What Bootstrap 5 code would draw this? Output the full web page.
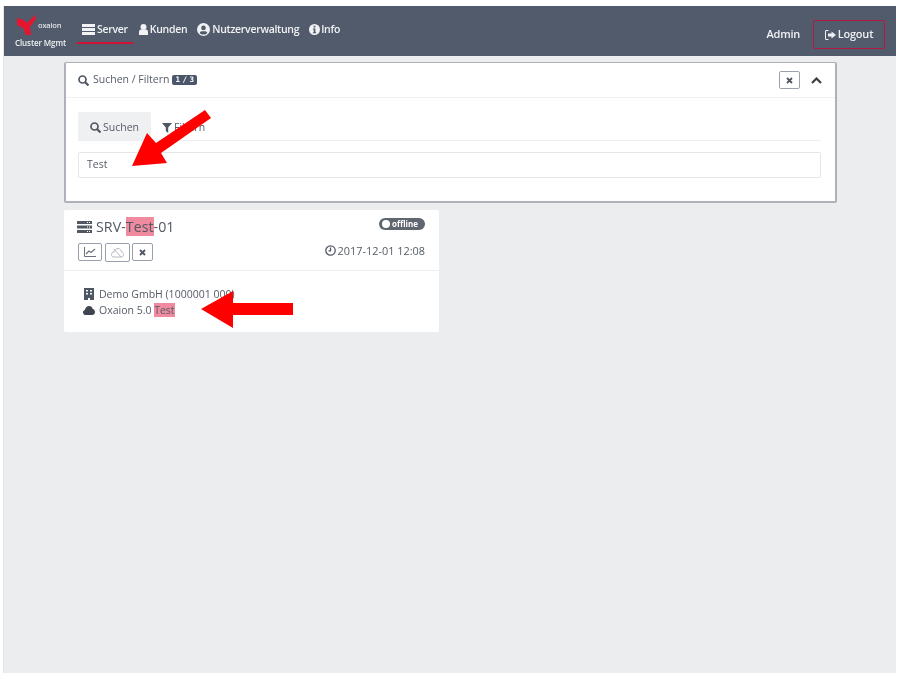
<!DOCTYPE html>
<html lang="de">
<head>
<meta charset="utf-8">
<title>Oxaion Cluster Mgmt</title>
<link rel="stylesheet" href="https://cdn.jsdelivr.net/npm/bootstrap@5.3.0/dist/css/bootstrap.min.css">
<style>
html,body{height:100%;background:#fff;}
body{font-family:"Open Sans","Liberation Sans",sans-serif;font-size:10.5px;color:#555b66;position:relative;overflow:hidden;}
.app-frame{position:absolute;left:3px;top:6px;width:893px;height:667px;background:#ecedef;filter:blur(.55px);display:flex;flex-direction:column;border-left:1px solid #e3e4e7;}
.top-bar{height:50px;background:#525b6b;color:#eef0f3;padding:0 11px 0 12px;flex:none;}
.brand-box{width:52px;height:50px;margin-right:9px;display:flex;flex-direction:column;font-weight:600;}
.brand-row{display:flex;align-items:center;height:21px;margin-top:9px;}
.brand-row span{font-size:7.5px;margin-left:1px;color:#dfe2e6;letter-spacing:-.2px;}
.brand-sub{font-size:8px;line-height:12px;white-space:nowrap;margin-top:1px;margin-left:-1px;letter-spacing:-.1px;}
.menu-item{height:32px;margin-top:6px;padding:10px 5px 5px 5px;display:flex;align-items:center;gap:2px;font-size:10.5px;font-weight:600;letter-spacing:-.3px;color:#f0f2f4;margin-bottom:12px;border-bottom:2px solid transparent;}
.menu-tight{gap:1px;}
.menu-item.is-on{border-bottom-color:#cf1236;}
.menu-item svg{fill:#f0f2f4;}
.admin-name{font-size:11px;font-weight:600;color:#eef0f3;margin-right:13px;letter-spacing:-.25px;}
.logout-btn{width:72px;height:29px;border:1px solid #b41a41;border-radius:2px;font-size:11px;font-weight:600;color:#eef0f3;display:flex;align-items:center;justify-content:center;gap:2px;letter-spacing:-.2px;}
.logout-btn svg{fill:#eef0f3;}
.logout-wrap{margin-top:14px;}
.page-body{padding:6px 59px 0 60px;flex:1;}
.filter-panel{height:141px;background:#fff;border:1px solid #adb1ba;border-width:1px 2px 2px 1px;border-left-width:2px;border-radius:2px;margin-bottom:7px;}
.filter-head{height:35px;border-bottom:1px solid #f1f2f4;padding:0 13px 0 12px;display:flex;align-items:center;}
.count-tag{background:#4c566a;color:#fff;font-family:"DejaVu Sans Mono","Liberation Mono",monospace;font-size:7.5px;font-weight:700;padding:0 3px;border-radius:2px;line-height:10px;margin-left:3px;word-spacing:-2px;}
.mini-btn{display:inline-flex;align-items:center;justify-content:center;height:18px;width:21px;border:1px solid #9aa1ad;border-radius:2px;background:#fff;}
.close-gap{margin-right:11px;}
.filter-tabs{display:flex;margin:14px 14px 0 12px;height:29px;border-bottom:1px solid #eceef0;}
.tab-on{width:73px;background:#eff0f2;display:flex;align-items:center;justify-content:center;gap:2px;font-size:10.5px;border-radius:2px 2px 0 0;padding-top:3px;}
.tab-off{padding:3px 0 0 11px;display:flex;align-items:center;gap:2px;font-size:10.5px;}
.search-field{margin:11px 14px 0 12px;height:26px;border:1px solid #e4e6ea;border-radius:2px;padding:0 8px;display:flex;align-items:center;font-size:10.5px;}
.server-tile{width:375px;height:122px;background:#fff;border-radius:2px;}
.tile-top{height:61px;border-bottom:1px solid #eff0f2;padding:7px 14px 0 13px;}
.server-title{font-size:14.2px;color:#525862;display:flex;align-items:center;gap:4px;line-height:20px;letter-spacing:.05px;}
.hit{background:#ef8a9f;}
.state-pill{background:#5f6670;color:#fff;border-radius:8px;font-size:8px;font-weight:700;line-height:12px;height:12px;width:46px;padding:0 3px;display:inline-flex;align-items:center;gap:2px;}
.state-dot{width:8px;height:8px;border-radius:50%;background:#fff;flex:none;}
.tile-tools{display:flex;gap:3px;margin-top:6px;margin-left:1px;}
.tool-a{width:24px;height:18px;}
.tool-b{width:25px;height:19px;}
.tool-c{width:21px;height:18px;margin-left:-1px;}
.stamp{font-size:10.9px;display:flex;align-items:center;gap:2px;margin-top:3px;}
.tile-body{padding:15px 0 0 20px;line-height:16px;font-size:10.5px;}
.tile-body div{display:flex;align-items:center;gap:5px;}
.tile-body .cloud-row{gap:4px;margin-left:-1px;}
.arrow-layer{position:absolute;left:0;top:0;}
</style>
</head>
<body>
<div class="app-frame">
  <nav class="top-bar d-flex align-items-start">
    <div class="brand-box">
      <div class="brand-row">
        <svg width="21" height="21" viewBox="0 0 21 21"><path fill="#e4162f" d="M1 3 L8 5 L11 8 L19 0 L20 4 L14 12 L15 20 L10 20 L7 13 L1 10 Z"/></svg>
        <span>oxaion</span>
      </div>
      <div class="brand-sub">Cluster Mgmt</div>
    </div>
    <div class="menu-item is-on"><svg width="13" height="11" viewBox="0 0 13 11"><path d="M0 0h13v3H0zM0 4h13v3H0zM0 8h13v3H0z"/></svg>Server</div>
    <div class="menu-item menu-tight"><svg width="11" height="11" viewBox="0 0 11 11"><circle cx="5.500" cy="3" r="3"/><path d="M1 11V7.500C1 6 2.500 5.500 3.500 5.500h4C8.500 5.500 10 6 10 7.500V11z"/></svg>Kunden</div>
    <div class="menu-item"><svg width="13" height="13" viewBox="0 0 13 13"><path fill-rule="evenodd" d="M6.500 0a6.500 6.500 0 1 0 0 13 6.500 6.500 0 0 0 0-13zm0 2.600a2.300 2.300 0 1 1 0 4.600 2.300 2.300 0 0 1 0-4.600zm0 9c-1.500 0-2.900-.6-3.800-1.700.3-1 1.300-1.700 2.300-1.700h3c1 0 2 .7 2.300 1.700-.9 1.100-2.300 1.700-3.800 1.700z"/></svg>Nutzerverwaltung</div>
    <div class="menu-item menu-tight"><svg width="11" height="11" viewBox="0 0 11 11"><path fill-rule="evenodd" d="M5.500 0a5.500 5.500 0 1 0 0 11 5.500 5.500 0 0 0 0-11zM4.600 1.800h1.800v1.700H4.600zM3.900 4.400h2.500v3.900h.8v1H3.900v-1h.8V5.400h-.8z"/></svg>Info</div>
    <div class="ms-auto d-flex align-items-center logout-wrap">
      <span class="admin-name">Admin</span>
      <div class="logout-btn"><svg width="11" height="10" viewBox="0 0 11 10"><path d="M3.500 0H1.500C.6 0 0 .6 0 1.500v7C0 9.400.6 10 1.500 10h2V9h-2C1.200 9 1 8.800 1 8.500v-7C1 1.200 1.200 1 1.500 1h2zM6.500 1.500V3.500H3v3h3.500v2L11 5z"/></svg>Logout</div>
    </div>
  </nav>
  <main class="page-body">
    <section class="filter-panel">
      <div class="filter-head">
        <svg width="11" height="11" viewBox="0 0 11 11" class="me-1" fill="none" stroke="#4f5663" stroke-width="1.700"><circle cx="4.500" cy="4.500" r="3.500"/><path d="M7 7l3.500 3.500" stroke-width="2.200"/></svg>
        <span>Suchen / Filtern</span><span class="count-tag">1 / 3</span>
        <span class="mini-btn ms-auto close-gap"><svg width="7" height="7" viewBox="0 0 7 7"><path stroke="#4f5663" stroke-width="1.800" d="M1 1l5 5M6 1L1 6"/></svg></span>
        <svg width="11" height="7" viewBox="0 0 11 7" fill="none" stroke="#3a4048" stroke-width="2.200"><path d="M1 6l4.500-4.500L10 6"/></svg>
      </div>
      <div class="filter-tabs">
        <div class="tab-on"><svg width="11" height="11" viewBox="0 0 11 11" fill="none" stroke="#4f5663" stroke-width="1.700"><circle cx="4.500" cy="4.500" r="3.500"/><path d="M7 7l3.500 3.500" stroke-width="2.200"/></svg>Suchen</div>
        <div class="tab-off"><svg width="10" height="10" viewBox="0 0 10 10"><path fill="#4f5663" d="M0 0h10L6.200 4.500V10L3.800 8V4.500z"/></svg>Filtern</div>
      </div>
      <div class="search-field">Test</div>
    </section>
    <article class="server-tile">
      <div class="tile-top">
        <div class="d-flex justify-content-between">
          <div class="server-title"><svg width="15" height="12" viewBox="0 0 15 12"><path fill="#525862" d="M0 0h15v3H0zM0 4.500h15v3H0zM0 9h15v3H0z"/><path fill="#fff" d="M10 1h1v1h-1zM12 1h1v1h-1zM10 5.500h1v1h-1zM12 5.500h1v1h-1zM10 10h1v1h-1zM12 10h1v1h-1z"/></svg><span>SRV-<span class="hit">Test</span>-01</span></div>
          <div><span class="state-pill"><span class="state-dot"></span>offline</span></div>
        </div>
        <div class="d-flex justify-content-between align-items-center">
          <div class="tile-tools">
            <span class="mini-btn tool-a"><svg width="12" height="10" viewBox="0 0 12 10" fill="none" stroke="#6a7280"><path d="M.5 0v9.500H12"/><path d="M2 7l3-3 2 1.500L11 2" stroke-width="1.200"/></svg></span>
            <span class="mini-btn tool-b"><svg width="13" height="10" viewBox="0 0 13 10" fill="none" stroke="#b5b9c0"><path d="M3 9C1.500 9 .5 8 .5 6.500S1.500 4 3 4c.5-2 2-3.500 4-3.500S10.500 2 10.500 4c1.200 0 2 1 2 2.500S11.500 9 10 9z"/><path d="M3 1l7 8"/></svg></span>
            <span class="mini-btn tool-c"><svg width="7" height="7" viewBox="0 0 7 7"><path stroke="#4f5663" stroke-width="1.800" d="M1 1l5 5M6 1L1 6"/></svg></span>
          </div>
          <div class="stamp"><svg width="11" height="11" viewBox="0 0 11 11" fill="none" stroke="#525862" stroke-width="1.300"><circle cx="5.500" cy="5.500" r="4.700"/><path d="M5.500 2.500v3.300H3.500"/></svg>2017-12-01 12:08</div>
        </div>
      </div>
      <div class="tile-body">
        <div><svg width="10" height="12" viewBox="0 0 10 12"><path fill="#4f5663" fill-rule="evenodd" d="M0 0h10v12H6V10H4v2H0zM2 2v1.500h2V2zM6 2v1.500h2V2zM2 5v1.500h2V5zM6 5v1.500h2V5z"/></svg><span>Demo GmbH (1000001 000)</span></div>
        <div class="cloud-row"><svg width="12" height="9" viewBox="0 0 12 9"><path fill="#3f454f" d="M3 9C1.300 9 0 7.900 0 6.400 0 5.200.8 4.300 1.900 4 2.200 1.800 3.900 0 6 0c1.900 0 3.300 1.200 3.700 3C11 3.200 12 4.500 12 6c0 1.700-1.300 3-3 3z"/></svg><span>Oxaion 5.0 <span class="hit">Test</span></span></div>
      </div>
    </article>
  </main>
</div>
<svg class="arrow-layer" width="900" height="677" viewBox="0 0 900 677">
  <path fill="#fe0000" d="M132 166 L147 133 L156 143 L205 110 L211 118 L161 153 L167 163 Z"/>
  <path fill="#fe0000" d="M201 309 L233 291 V303 H293 V315 H233 V328 Z"/>
</svg>
</body>
</html>
